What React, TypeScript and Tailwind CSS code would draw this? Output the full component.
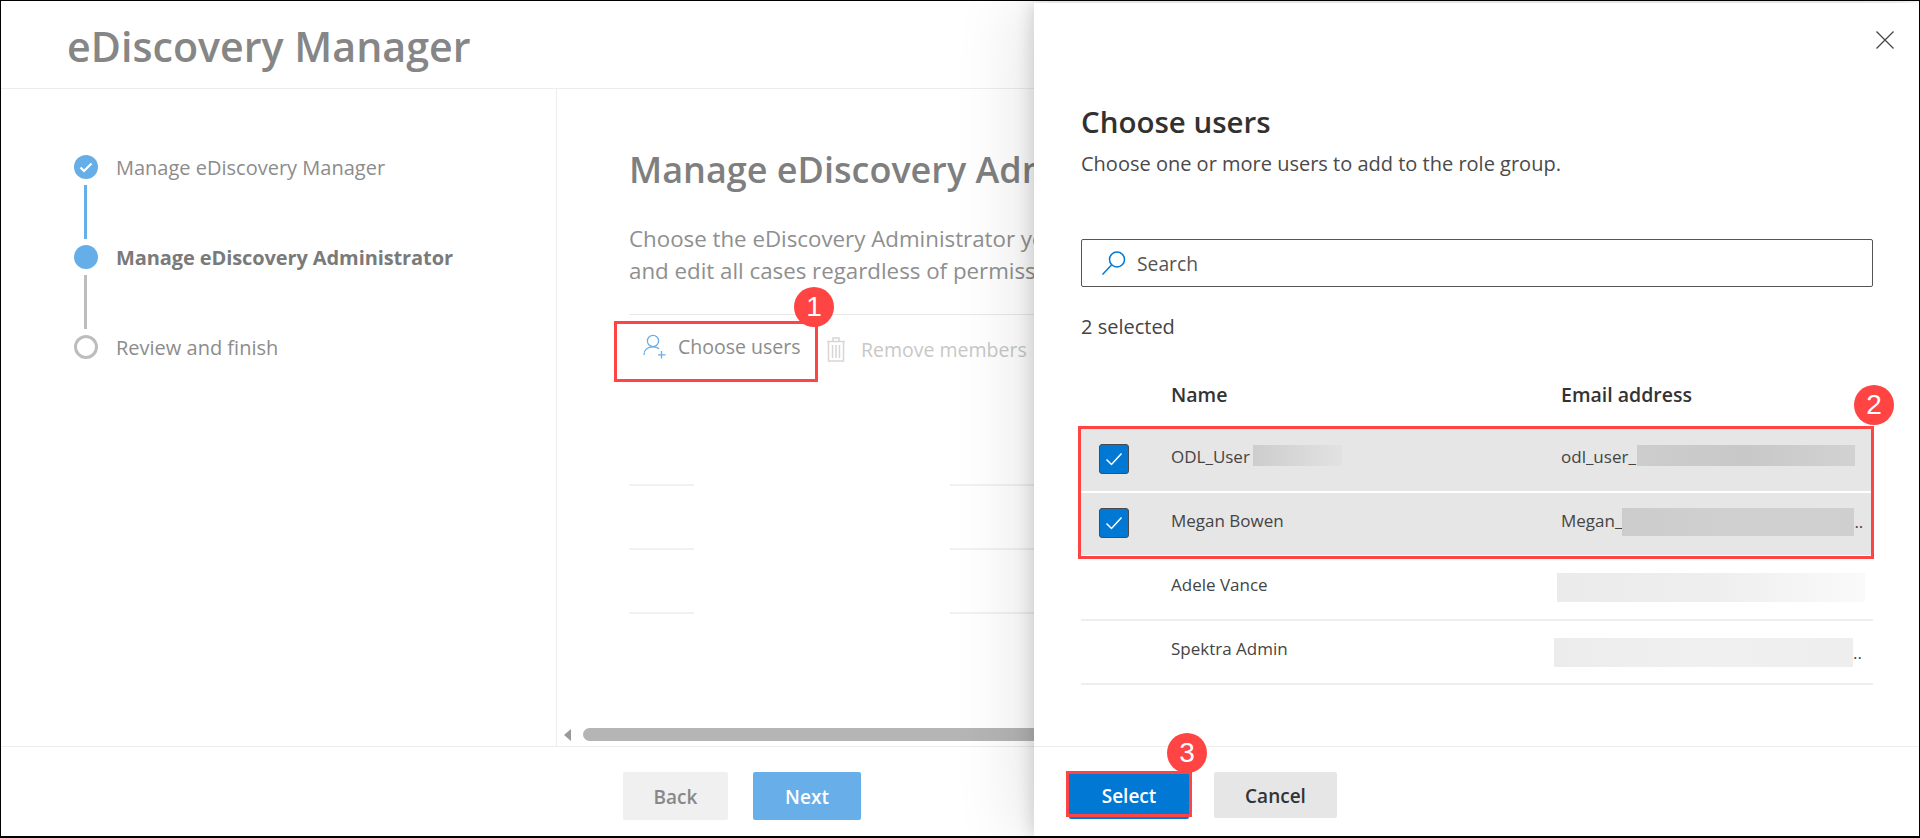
import React from 'react';

const font = "font-['Open_Sans',sans-serif]";

function Badge({ n, className }: { n: number; className: string }) {
  return (
    <div className={`absolute w-10 h-10 rounded-full bg-[#ff4444] text-white text-[28px] leading-none flex items-center justify-center font-['Liberation_Sans',sans-serif] ${className}`}>
      {n}
    </div>
  );
}

function PersonPlus() {
  return (
    <svg width="24" height="26" viewBox="0 0 24 26" fill="none" stroke="#68aee8" strokeWidth="1.3">
      <circle cx="10" cy="7" r="5.6" />
      <path d="M1 21c0-5 3.5-8.2 9-8.2 2.6 0 4.6.7 6.200 2" />
      <path d="M18.500 17v7.500M15 20.800h7.500" />
    </svg>
  );
}

function Trash() {
  return (
    <svg width="18" height="25" viewBox="0 0 18 25" fill="none" stroke="#d6d6d6" strokeWidth="1.500">
      <path d="M0 4.500h18M6 4V1h6v3" />
      <path d="M1.500 4.500v19.500h15V4.500" />
      <path d="M5.500 8v13M9 8v13M12.500 8v13" />
    </svg>
  );
}

function SearchIcon() {
  return (
    <svg width="26" height="26" viewBox="0 0 26 26" fill="none" stroke="#0078d4" strokeWidth="1.500">
      <circle cx="16" cy="9.500" r="7.500" />
      <path d="M10.500 15L1.500 24.500" />
    </svg>
  );
}

function Checkbox() {
  return (
    <div className="w-[30px] h-[30px] shrink-0 rounded-[3px] bg-[#0078d4] border border-[#4a4a4a] flex items-center justify-center">
      <svg width="18" height="14" viewBox="0 0 18 14" fill="none" stroke="white" strokeWidth="1.500">
        <path d="M1.500 7.500L6.500 12.500L16.500 1.500" />
      </svg>
    </div>
  );
}

function Step({ label, state }: { label: string; state: 'done' | 'current' | 'todo' }) {
  return (
    <div className="flex items-center h-6">
      {state === 'done' && (
        <div className="w-6 h-6 rounded-full bg-[#65aee8] flex items-center justify-center">
          <svg width="14" height="11" viewBox="0 0 14 11" fill="none" stroke="white" strokeWidth="2.200">
            <path d="M1.500 5.500L5 9L12.500 1.500" />
          </svg>
        </div>
      )}
      {state === 'current' && <div className="w-6 h-6 rounded-full bg-[#65aee8]" />}
      {state === 'todo' && <div className="w-6 h-6 rounded-full border-[3px] border-[#bdbdbd]" />}
      <span className={`ml-[18px] mt-[2px] text-[20px] ${state === 'current' ? 'font-bold text-[#7a7a7a] tracking-[-0.1px]' : 'text-[#8c8c8c]'}`}>
        {label}
      </span>
    </div>
  );
}

function Row({ name, selected, children }: { name: React.ReactNode; selected?: boolean; children: React.ReactNode }) {
  return (
    <div className={`flex items-center h-[64px] ${selected ? 'bg-[#e6e6e6] border-b-2 border-white' : 'border-b-2 border-[#eeeeee]'}`}>
      <div className="w-[90px] pl-[18px] shrink-0 -mt-[2px]">{selected && <Checkbox />}</div>
      <div className="w-[390px] shrink-0 flex items-center text-[17px] text-[#444444] -mt-[7px]">{name}</div>
      <div className="flex-1 flex items-center text-[17px] text-[#444444] -mt-[7px]">{children}</div>
    </div>
  );
}

// the list behind the panel is blanked out in the middle, only the ends of each divider show
function BrokenLine() {
  return (
    <div className="flex">
      <div className="w-[65px] h-[2px] bg-[#f1f1f1]" />
      <div className="ml-[256px] flex-1 h-[2px] bg-[#f1f1f1]" />
    </div>
  );
}

export default function App() {
  return (
    <div className={`relative w-[1920px] h-[838px] overflow-hidden bg-white border-t border-l border-r border-b-2 border-black ${font}`}>
      <div className="flex flex-col h-full">
        <div className="h-[88px] shrink-0 border-b border-[#ededed] pl-[66px] flex items-center">
          <h1 className="text-[41.200px] font-semibold text-[#868686] mt-[4px]">eDiscovery Manager</h1>
        </div>
        <div className="flex-1 flex min-h-0">
          <div className="w-[556px] shrink-0 border-r border-[#ededed] pl-[73px] pt-[66px]">
            <Step label="Manage eDiscovery Manager" state="done" />
            <div className="w-[3px] h-[54px] bg-[#65aee8] ml-[10px] my-[6px]" />
            <Step label="Manage eDiscovery Administrator" state="current" />
            <div className="w-[3px] h-[54px] bg-[#bdbdbd] ml-[10px] my-[6px]" />
            <Step label="Review and finish" state="todo" />
          </div>
          <div className="flex-1 relative pl-[72px] pt-[59px] flex flex-col overflow-hidden">
            <h2 className="text-[36px] leading-[44px] font-semibold text-[#7f7f7f] whitespace-nowrap">Manage eDiscovery Administrator</h2>
            <p className="mt-[31px] text-[22.300px] leading-[32px] text-[#8f8f8f] whitespace-nowrap">
              Choose the eDiscovery Administrator you want to view
              <br />
              and edit all cases regardless of permissions
            </p>
            <div className="mt-[27px] border-t border-[#e8e8e8] h-0" />
            <div className="flex items-start pt-[17px] pl-[14px]">
              <div className="flex items-center gap-[11px] w-[184px]">
                <PersonPlus />
                <span className="text-[19.500px] text-[#8c8c8c]">Choose users</span>
              </div>
              <div className="flex items-center gap-[16px] pt-[3px]">
                <Trash />
                <span className="text-[19.500px] text-[#c8c8c8] whitespace-nowrap">Remove members</span>
              </div>
            </div>
            <div className="mt-[120px] flex flex-col gap-[62px]">
              <BrokenLine />
              <BrokenLine />
              <BrokenLine />
            </div>
            <div className="absolute left-[7px] right-0 bottom-[5px] flex items-center gap-[12px]">
              <div className="w-0 h-0 border-y-[6px] border-y-transparent border-r-[7px] border-r-[#9a9a9a]" />
              <div className="flex-1 h-[13px] rounded-full bg-[#b5b5b5]" />
            </div>
          </div>
        </div>
        <div className="h-[90px] shrink-0 border-t border-[#ededed] pl-[622px] pt-[25px] flex items-start gap-[25px]">
          <button className="w-[105px] h-[48px] pt-[3px] rounded-[2px] bg-[#f0f0f0] text-[#888888] text-[19px] font-semibold">Back</button>
          <button className="w-[108px] h-[48px] pt-[3px] rounded-[2px] bg-[#68aee8] text-white text-[19px] font-semibold">Next</button>
        </div>
      </div>

      <div className="absolute top-[2px] right-0 bottom-0 w-[885px] bg-white shadow-[-3px_0_16px_rgba(0,0,0,0.14),-20px_0_60px_rgba(0,0,0,0.09)] flex flex-col">
        <div className="flex justify-end pt-[28px] pr-[25px] h-[60px]">
          <svg width="18" height="18" viewBox="0 0 18 18" fill="none" stroke="#444444" strokeWidth="1.200">
            <path d="M0.500 0.500L17.500 17.500M17.500 0.500L0.500 17.500" />
          </svg>
        </div>
        <div className="flex-1 flex flex-col pl-[47px] pr-[46px]">
          <h3 className="mt-[39px] text-[29.500px] leading-[40px] font-semibold text-[#323130]">Choose users</h3>
          <p className="mt-[8px] text-[20px] leading-[28px] text-[#4a4a4a]">Choose one or more users to add to the role group.</p>
          <div className="mt-[61px] h-[48px] rounded-[2px] border border-[#555555] flex items-center pl-[19px] gap-[10px]">
            <SearchIcon />
            <span className="mt-[2px] text-[19.300px] text-[#555555]">Search</span>
          </div>
          <div className="mt-[27px] text-[20px] leading-[26px] text-[#444444]">2 selected</div>
          <div className="mt-[37px] flex h-[36px] items-center text-[19.500px] font-semibold text-[#333333]">
            <span className="ml-[90px] w-[390px]">Name</span>
            <span>Email address</span>
          </div>
          <div className="mt-[16px]">
            <Row selected name={<>ODL_User<span className="ml-[3px] -mt-[3px] w-[89px] h-[21px] bg-gradient-to-r from-[#cdcdcd] to-[#e2e2e2]" /></>}>
              odl_user_<span className="ml-[1px] -mt-[3px] w-[218px] h-[21px] bg-gradient-to-r from-[#cdcdcd] via-[#c8c8c8] to-[#d2d2d2]" />
            </Row>
            <Row selected name="Megan Bowen">
              Megan_<span className="mt-[2px] w-[232px] h-[28px] bg-gradient-to-r from-[#cccccc] via-[#d0d0d0] to-[#cfcfcf]" />
              <span className="self-end pb-[1px]">..</span>
            </Row>
            <Row name="Adele Vance">
              <span className="-ml-[4px] mt-[6px] w-[308px] h-[29px] bg-gradient-to-r from-[#ebebeb] via-[#eeeeee] to-[#fafafa]" />
            </Row>
            <Row name="Spektra Admin">
              <span className="-ml-[7px] mt-[7px] w-[299px] h-[29px] bg-gradient-to-r from-[#ececec] via-[#f0f0f0] to-[#eeeeee]" />
              <span className="self-end pb-[1px]">..</span>
            </Row>
          </div>
        </div>
        <div className="h-[90px] shrink-0 border-t border-[#ededed] pl-[35px] pt-[25px] flex items-start gap-[25px]">
          <button className="w-[120px] h-[47px] pt-[2px] rounded-[2px] bg-[#0078d4] text-white text-[19px] font-semibold">Select</button>
          <button className="w-[123px] h-[46px] pt-[2px] rounded-[2px] bg-[#e6e6e6] text-[#333333] text-[19px] font-semibold">Cancel</button>
        </div>
      </div>

      {/* callouts */}
      <div className="absolute left-[613px] top-[320px] w-[204px] h-[61px] border-[3px] border-[#ff4444]" />
      <div className="absolute left-[1077px] top-[425px] w-[796px] h-[133px] border-[3px] border-[#ff4444]" />
      <div className="absolute left-[1065px] top-[770px] w-[126px] h-[46px] border-[3px] border-[#ff4444]" />
      <Badge n={1} className="left-[793px] top-[286px]" />
      <Badge n={2} className="left-[1853px] top-[384px]" />
      <Badge n={3} className="left-[1166px] top-[732px]" />
    </div>
  );
}
